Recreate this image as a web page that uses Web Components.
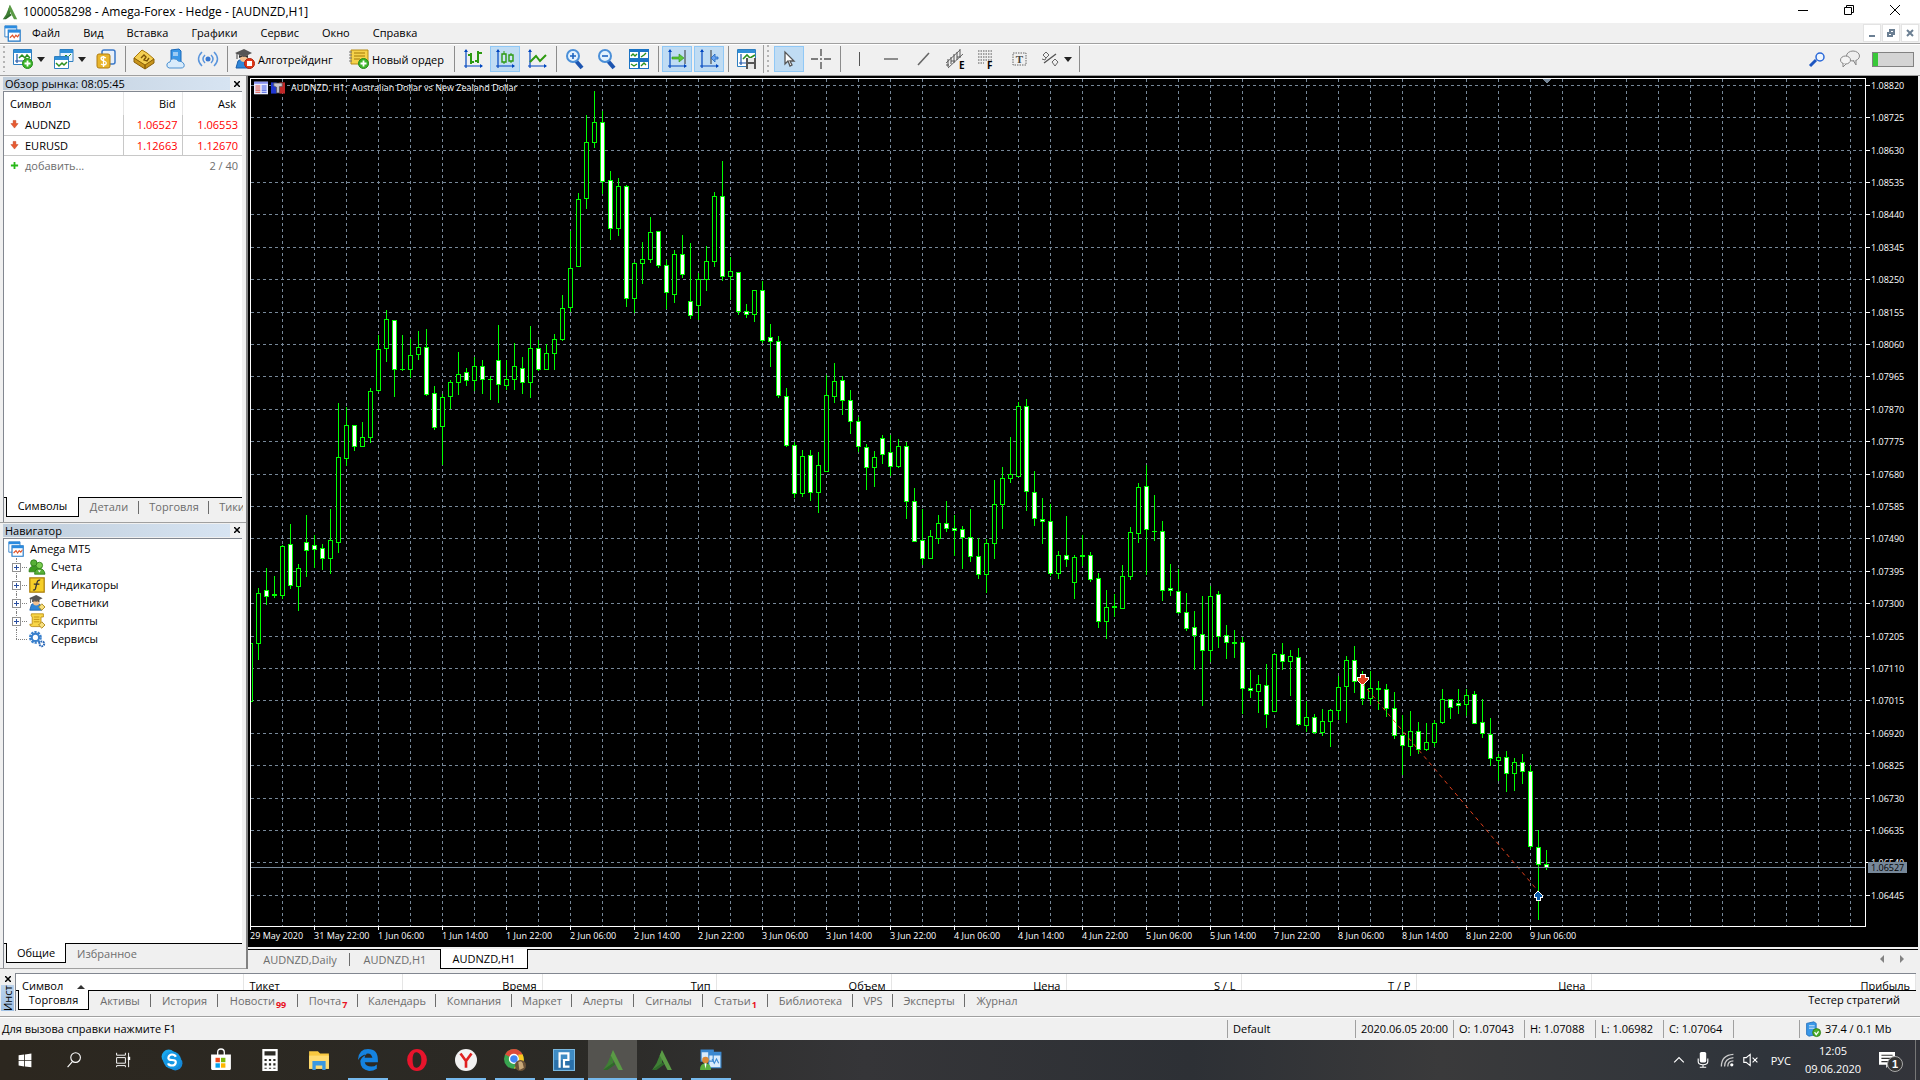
<!DOCTYPE html>
<html lang="ru">
<head>
<meta charset="utf-8">
<title>1000058298 - Amega-Forex - Hedge - [AUDNZD,H1]</title>
<style>
  html, body {
    height: 100%;
    margin: 0;
  }

  body {
    font-family: "Open Sans", "Noto Sans", sans-serif;
    font-size: 11px;
    color: #000;
    background: #f0f0f0;
    overflow: hidden;
  }
</style>
</head>
<body>
<terminal-app></terminal-app>

<script>
// icon drawings, all on a 20x20 grid
const AMEGA = '<path d="M10 1 5 13l-4 6 9-5z" fill="#3f7f35"/><path d="M10 1l9 18h-4L8 6z" fill="#5a9a45"/><path d="M1 19l10-7 1 2-7 5z" fill="#2f6a2a"/>';
const WINDOWS = '<path d="M1 1h14v13H1z" fill="#fff" stroke="#1b74c5"/><path d="M1 1h14v3H1z" fill="#2a8be0"/><path d="M5 6h14v13H5z" fill="#fff" stroke="#1b74c5" stroke-width="1.4"/><path d="M5 6h14v3H5z" fill="#2a8be0"/><path d="M7 15l3-3 2 3 2-3 2 2 2-3" fill="none" stroke="#e0542a" stroke-width="1.4"/>';
const AXES = '<path d="M3 1v18M1 17h18" stroke="#0046c0" stroke-width="1.2" fill="none"/><path d="M1 3l2-3 2 3zM17 15l3 2-3 2z" fill="#0046c0"/>';
const PLUS = '<circle cx="14.500" cy="14.500" r="5" fill="#3cb52a" stroke="#248a18"/><path d="M14.500 11.500v6M11.500 14.500h6" stroke="#fff" stroke-width="1.800"/>';
const HATMAN = '<path d="M3 12q5-4 11 0l2 7H1z" fill="#2f86d8" stroke="#1b5da8"/><circle cx="9" cy="9" r="4" fill="#f0c090"/><path d="M0 4l9-4 8 4-8 4z" fill="#555"/><path d="M4 6v3q5-3 9 0V6l-4 2z" fill="#333"/><path d="M2 4v6" stroke="#444"/>';
const SCROLL = '<path d="M3 1h15v4h-3v12H4q-3 0-3-3h3V5q-2-1-1-4z" fill="#f8d648" stroke="#b8860b"/><path d="M6 5h7M6 8h7M6 11h7" stroke="#b8860b"/>';

const ICONS = {
  amega: AMEGA,
  windows: WINDOWS,
  newChart: '<path d="M.5.500h18v15H.500z" fill="#fff" stroke="#2f7fc0"/><path d="M1 1h17v3H1z" fill="#2f8fd8"/><path d="M4 5v9M2 12h14" stroke="#1d55a8" stroke-width="1.200"/><path d="M6 9l3-3 3 3 2-3 3 3" fill="none" stroke="#2c9020" stroke-width="1.500"/>' + PLUS,
  profiles: '<path d="M6 .500h13v12H6z" fill="#e8f3fd" stroke="#2f7fc0"/><path d="M6 1h13v3H6z" fill="#2f8fd8"/><path d="M9 9l3-3 2 2 3-3" fill="none" stroke="#2c9020"/><path d="M.500 7.500h14v12H.500z" fill="#fff" stroke="#2f7fc0"/><path d="M1 8h13v3H1z" fill="#2f8fd8"/><path d="M2 14l3 3 3-3 2 2 3-3" fill="none" stroke="#2c9020" stroke-width="1.500"/>',
  dollar: '<rect x="6" y="1" width="13" height="14" rx="2" fill="#e8f0fa" stroke="#3a78c8" stroke-width="1.500"/><rect x="1" y="5" width="13" height="14" rx="2" fill="#e9b52b" stroke="#b07d10"/><path d="M10 9q-4-2-5 0 0 2 3 3t2 3q-2 2-5 0M7.500 7v11" fill="none" stroke="#fff" stroke-width="1.300"/>',
  book: '<path d="M0 9l8-8 5 3 7 6-9 7z" fill="#f4cf52" stroke="#a8780c"/><path d="M0 9v4l11 7v-4zM11 16l9-6v4l-9 6z" fill="#c8941c" stroke="#8a6008"/><path d="M7 9l3-3 2 2-2 3 3 1 2-3" stroke="#7a5206" stroke-width="1.400" fill="none"/>',
  cloud: '<path d="M5 1l8-1 2 2v12H5z" fill="#3a98e8" stroke="#1b68b8"/><path d="M7 4h5M7 6h5" stroke="#fff"/><path d="M3 19q-3-1-2-4 1-2 3-2 1-4 5-3 2 0 3 2 5 0 6 3 1 4-3 4z" fill="#d8ebfb" stroke="#4a8fd0"/>',
  signal: '<circle cx="10" cy="10" r="2.500" fill="#3a78d0"/><path d="M7 6q-4 4 0 8M13 6q4 4 0 8M4 3q-7 7 0 14M16 3q7 7 0 14" fill="none" stroke="#5a95dc" stroke-width="1.500"/>',
  algo: HATMAN + '<circle cx="14.500" cy="14.500" r="5" fill="#e03818" stroke="#b02008"/><path d="M12 12h5v5h-5z" fill="#fff"/>',
  order: '<path d="M2 1h17v14H2z" fill="#f6d24a" stroke="#b58a14"/><path d="M0 3h3M0 6h3M0 9h3M0 12h3" stroke="#777"/><path d="M5 4h11M5 7h11M5 10h6" stroke="#a07808"/>' + PLUS,
  bars: AXES + '<path d="M8 4v11M5 6h3M8 13h3M15 2v12M12 12h3M15 4h4" stroke="#2c9a10" stroke-width="2" fill="none"/>',
  candles: AXES + '<path d="M9 2v13M16 4v10" stroke="#2c9a10"/><path d="M7 5h4v8H7zM14 6h4v6h-4z" fill="#cfe5f8" stroke="#2c9a10" stroke-width="1.400"/>',
  line: AXES + '<path d="M3 13l6-6 4 5 6-6" stroke="#2c9a10" stroke-width="2" fill="none"/>',
  zoomIn: '<path d="M11 12l6 7" stroke="#1d55b0" stroke-width="4"/><circle cx="8" cy="7" r="6" fill="#e4f2fd" stroke="#4a8fd8" stroke-width="2"/><path d="M8 4v6M5 7h6" stroke="#1d64c0" stroke-width="1.600"/>',
  zoomOut: '<path d="M11 12l6 7" stroke="#1d55b0" stroke-width="4"/><circle cx="8" cy="7" r="6" fill="#e4f2fd" stroke="#4a8fd8" stroke-width="2"/><path d="M5 7h6" stroke="#1d64c0" stroke-width="1.600"/>',
  tile: '<path d="M0 0h20v20H0z" fill="#1b74c5"/><path d="M1 3h8v6H1zM11 3h8v6h-8zM1 13h8v6H1zM11 13h8v6h-8z" fill="#fff"/><path d="M2 7l2-2 2 2 2-2M12 8l3-2 2-2M2 15l3 2 3-2M12 17l3-3 2 2" stroke="#2c9020" stroke-width="1.400" fill="none"/>',
  shift: AXES + '<path d="M18 1v14" stroke="#333"/><path d="M5 8h7V5l5 4-5 4v-3H5z" fill="#5cc83a" stroke="#2c9010" stroke-width=".600"/>',
  autoscroll: AXES + '<path d="M12 1v14" stroke="#333"/><path d="M19 8h-3V5l-4 4 4 4v-3h3z" fill="#6aa4f0" stroke="#1d64c0" stroke-width=".800"/>',
  saveChart: '<path d="M.500.500h18v17H.500z" fill="#fff" stroke="#2f7fc0"/><path d="M1 1h17v3H1z" fill="#2f8fd8"/><path d="M4 5v11M2 14h8" stroke="#1d55a8" stroke-width="1.200"/><path d="M6 10l4-4 3 3 5-3" fill="none" stroke="#2c9020" stroke-width="1.600"/><path d="M9 9h10v11H9z" fill="#555"/><path d="M11 9h6v4h-6zM11 15h6v5h-6z" fill="#e8e8e8"/>',
  cursor: '<path d="M6 3v12l3-3 2 5 2-1-2-4h4z" fill="#fff" stroke="#555" stroke-width="1.300"/>',
  cross: '<path d="M10 0v7M10 13v7M0 10h7M13 10h7M10 9v2" stroke="#555" stroke-width="1.400"/>',
  vline: '<path d="M10.500 3v14" stroke="#555"/>',
  hline: '<path d="M3 10h14" stroke="#555" stroke-width="1.300"/>',
  trend: '<path d="M5 16L16 4" stroke="#666" stroke-width="1.600"/>',
  channel: '<path d="M1 14L15 1M3 19L18 5" stroke="#666"/><path d="M3 10v8M6 8v7M9 5v9M12 3v8M15 0v8M1 16h3M6 12h4M12 8h4" stroke="#555" fill="none"/><text x="14" y="20" font-size="10" font-weight="700">E</text>',
  fibo: '<path d="M1 2h14M1 5h14M1 8h14M1 11h14M1 14h6" stroke="#555" stroke-dasharray="1.500 1"/><text x="10" y="20" font-size="10" font-weight="700">F</text>',
  textTool: '<path d="M4 4h13v12H4z" fill="none" stroke="#666" stroke-dasharray="1.500 1"/><text x="10.500" y="14" font-size="11" font-weight="700" text-anchor="middle" font-family="Liberation Serif" fill="#444">T</text>',
  arrows: '<path d="M4 14L16 5" stroke="#555" stroke-width="1.300"/><path d="M3 6l3-3 3 3-3 3zM2 10l3 1 1-2M12 13l3-3 3 3-3 4z" fill="none" stroke="#666"/>',
  search: '<path d="M8 11l-6 6" stroke="#1d55c0" stroke-width="3"/><circle cx="12" cy="8" r="4" fill="#eef6ff" stroke="#2a68d8" stroke-width="1.500"/>',
  chat: '<ellipse cx="13" cy="7" rx="6.500" ry="5" fill="#eee" stroke="#888"/><path d="M13 11l3 5v-5" fill="#ddd" stroke="#888"/><ellipse cx="5.500" cy="11" rx="5" ry="4" fill="#f4f4f4" stroke="#888"/><path d="M3 14v4l3-3" fill="#eee" stroke="#888"/>',
  users: '<circle cx="6" cy="5" r="4" fill="#58b038" stroke="#267810"/><path d="M0 16q0-7 6-7t6 7z" fill="#3c9a20" stroke="#267810"/><circle cx="13" cy="8" r="4" fill="#7acc50" stroke="#267810"/><path d="M7 19q0-7 6-7t7 7z" fill="#58b038" stroke="#267810"/><path d="M11 14l2 3 2-3z" fill="#fff"/>',
  indicator: '<path d="M1 1h18v18H1z" fill="#f6cf28" stroke="#a87c08" stroke-width="1.500"/><path d="M14 4q-3-1-4 3L8 15q-1 2-3 1M6 9h7" fill="none" stroke="#333" stroke-width="1.600"/>',
  advisor: HATMAN + '<path d="M12 15l4-4 4 4-4 4z" fill="#f8e080" stroke="#a07808"/>',
  script: SCROLL + '<path d="M12 15l4-4 4 4-4 4z" fill="#f8e080" stroke="#a07808"/>',
  service: '<circle cx="8" cy="8" r="6" fill="none" stroke="#3a80cc" stroke-width="4" stroke-dasharray="2.600 1.170"/><circle cx="8" cy="8" r="4.500" fill="#fff" stroke="#3a80cc" stroke-width="2.500"/><circle cx="16" cy="16" r="3" fill="#fff" stroke="#2a68b8" stroke-width="2.500" stroke-dasharray="2 .800"/>',
  down: '<path d="M7 1h6v7h5l-8 10L2 8h5z" fill="#e85a30" stroke="#b83a18"/>',
  add: '<path d="M10 2v16M2 10h16" stroke="#28b818" stroke-width="4"/>',
  server: '<path d="M2 3l9-2 3 2v14l-9 2-3-2z" fill="#3a98e8" stroke="#1b68b8"/><path d="M5 6h7M5 9h7" stroke="#fff"/><circle cx="14.500" cy="14.500" r="5" fill="#4caf2a" stroke="#2a7a10"/><path d="M12 14l2 3 3-4" fill="none" stroke="#fff" stroke-width="1.600"/>',
  start: '<path d="M2 4l7-1v7H2zM10 3l8-1v8h-8zM2 11h7v7l-7-1zM10 11h8v8l-8-1z" fill="#fff"/>',
  find: '<circle cx="12" cy="7" r="6" fill="none" stroke="#fff" stroke-width="1.400"/><path d="M8 12l-6 7" stroke="#fff" stroke-width="1.400"/>',
  taskview: '<path d="M2 1v3h11V1M2 7h11v7H2zM2 19v-2h11v2M17 1v18" fill="none" stroke="#fff" stroke-width="1.200"/><path d="M16 6h3v4h-3z" fill="#fff"/>',
  skype: '<circle cx="7" cy="7" r="6.500" fill="#1aa8ee"/><circle cx="13" cy="13" r="6.500" fill="#1588d8"/><circle cx="10" cy="10" r="8" fill="#1598e4"/><path d="M13.500 7q-1-2-3.500-2T6.800 7.500 10 10t3.400 2.500T10 15t-3.600-2" fill="none" stroke="#fff" stroke-width="2"/>',
  store: '<path d="M7 6V3q0-3 3-3t3 3v3" fill="none" stroke="#fff" stroke-width="1.200"/><path d="M1 5h18v13q0 1-1 1H2q-1 0-1-1z" fill="#fff"/><path d="M5 8h4v4H5z" fill="#f04a1c"/><path d="M10 8h4v4h-4z" fill="#7cb90a"/><path d="M5 13h4v4H5z" fill="#02a2ec"/><path d="M10 13h4v4h-4z" fill="#fdb700"/>',
  calc: '<path d="M3 0h14v20H3z" fill="#fff"/><path d="M5 2h10v4H5zM5 9h2v2H5zM9 9h2v2H9zM13 9h2v2h-2zM5 13h2v2H5zM9 13h2v2H9zM13 13h2v2h-2zM5 17h2v1H5zM9 17h2v1H9zM13 17h2v1h-2z" fill="#2d2b26"/>',
  folder: '<path d="M1 2h8l2 2h8v14H1z" fill="#f8c840"/><path d="M1 6h18v12H1z" fill="#ffdc72"/><path d="M4 11h12v8h-3v-4H7v4H4z" fill="#3a98e0"/>',
  edge: '<path d="M1 9Q2 0 10 0q9 0 9 10v2H7q1 4 6 4 3 0 5-2v4q-3 2-7 2-8-1-8-9 1-4 6-6-5 0-8 5zM7 8h7q-1-4-4-4T7 8z" fill="#1583e0"/>',
  opera: '<path fill-rule="evenodd" d="M10 0a9 10 0 1 0 0 20 9 10 0 1 0 0-20zm0 3q4 1 4 7t-4 7-4-7 4-7z" fill="#e8142c"/>',
  yandex: '<circle cx="10" cy="10" r="10" fill="#f2f2f2"/><path d="M5 4l5 7v6M15 4l-5 7" fill="none" stroke="#e02020" stroke-width="2.400"/>',
  chrome: '<circle cx="9" cy="9" r="9" fill="#38a550"/><path d="M9 9L1 5q3-5 8-5t8 5z" fill="#dd4b3a"/><path d="M9 18l4-8V5h4q4 10-8 13z" fill="#fbc820"/><circle cx="9" cy="9" r="4" fill="#4285f4" stroke="#fff" stroke-width="1.200"/><circle cx="15" cy="15" r="5" fill="#6a5238"/><path d="M13 12q3-2 4 1l1 4-4 2z" fill="#c8a878"/>',
  pivot: '<path d="M0 0h20v20H0z" fill="#7ab8e0"/><path d="M1 1h18v18H1z" fill="#2a70aa"/><path d="M1 1h18v9H1z" fill="#3f8cc4"/><path d="M6 17V4h8v6H10v6h5" fill="none" stroke="#fff" stroke-width="2"/>',
  meta: '<path d="M1 1h11v10H1zM8 3h11v14H8z" fill="#d8ebfb" stroke="#3a88d0"/><path d="M8 3h11v3H8zM1 1h11v2H1z" fill="#3a88d0"/><path d="M11 9l2 4 2-4 2 4" fill="none" stroke="#3a88d0"/><circle cx="5" cy="10" r="3" fill="#d88838"/><path d="M0 19q0-6 5-6t5 6z" fill="#5cb040"/><path d="M4 13h2l-1 5z" fill="#fff"/>',
  up: '<path d="M4 13l6-6 6 6" fill="none" stroke="#fff" stroke-width="1.500"/>',
  mic: '<rect x="6" y="0" width="8" height="13" rx="2" fill="#fff"/><path d="M4 8v4q0 4 6 4t6-4V8M10 16v3M6 19h8" fill="none" stroke="#fff" stroke-width="1.400"/>',
  wifi: '<path d="M3 18Q3 4 18 3M7 18Q7 8 18 7M11 18q0-7 7-7" fill="none" stroke="#ccc" stroke-width="1.600"/><circle cx="16" cy="16" r="2" fill="#fff"/>',
  mute: '<path d="M1 7h3l5-4v14l-5-4H1zM12 7l6 6M18 7l-6 6" fill="none" stroke="#fff" stroke-width="1.400"/>',
  notify: '<path d="M0 0h20v16h-7l-4 4v-4H0z" fill="#fff"/><path d="M3 4h14M3 8h14M3 12h10" stroke="#333" stroke-width="1.400"/>',
  list: '<path d="M0 1h20v18H0z" fill="#e8ecff"/><path d="M0 1h20v3H0z" fill="#8a94f0"/><path d="M2 7h7M2 10h7M2 13h7M2 16h7" stroke="#e05040" stroke-width="1.500"/><path d="M11 7h7M11 10h7M11 13h7M11 16h7" stroke="#4058e0" stroke-width="1.500"/>',
  trade: '<path d="M0 2h8v16H0z" fill="#2038d0"/><path d="M12 2h8v16h-8z" fill="#c02828"/><path d="M4 3h12v5h-4v9H8V9L4 7z" fill="#c8c8d0" stroke="#555"/>'
};

function define(name, html, setup) {
  const template = document.createElement('template');
  template.innerHTML = html;

  customElements.define(name, class extends HTMLElement {
    constructor() {
      super();
      this.attachShadow({ mode: 'open' });
      this.shadowRoot.appendChild(template.content.cloneNode(true));
    }

    connectedCallback() {
      if (setup && !this.ready) setup(this, this.shadowRoot);
      this.ready = true;
    }
  });
}

// ---------- small parts ----------

define('mt-icon', `
  <style>
    :host { display: block; flex: none; width: var(--size, 20px); height: var(--size, 20px); }
    svg { display: block; width: 100%; height: 100%; overflow: visible; }
  </style>
  <svg viewBox="0 0 20 20" aria-hidden="true"></svg>
`, (el, root) => {
  root.querySelector('svg').innerHTML = ICONS[el.getAttribute('name')];
});

define('tool-button', `
  <style>
    :host { display: block; flex: none; padding: 0 1px; }
    button {
      display: flex; align-items: center; justify-content: center; gap: 4px;
      box-sizing: border-box; width: 30px; height: 26px; padding: 0;
      font: inherit; color: inherit; white-space: nowrap;
      background: none; border: 1px solid transparent;
    }
    :host([pressed]) button { background: #c0dcf3; border-color: #90c8f6; }
    :host([wide]) button { width: var(--w); padding: 0 3px; gap: 3px; justify-content: flex-start; }
    :host([menu]) { padding: 0; }
    :host([menu]) button { width: 41px; }
    i { display: none; border: 4px solid transparent; border-top: 5px solid #222; border-bottom: 0; }
    :host([menu]) i { display: block; }
  </style>
  <button type="button"><mt-icon></mt-icon><slot></slot><i></i></button>
`, (el, root) => {
  const icon = document.createElement('mt-icon');
  icon.setAttribute('name', el.getAttribute('icon'));
  root.querySelector('mt-icon').replaceWith(icon);
  if (el.hasAttribute('label')) {
    root.querySelector('button').setAttribute('aria-label', el.getAttribute('label'));
  }
});

define('tool-sep', `
  <style>
    :host { display: block; flex: none; width: 6px; height: 26px; }
    :host::before { content: ""; display: block; width: 1px; height: 100%; margin-left: 3px; background: #8c8c8c; }
  </style>
`);

define('tool-grip', `
  <style>
    :host { display: block; flex: none; width: 8px; height: 26px; }
    :host::before {
      content: ""; display: block; width: 2px; height: 100%; margin-left: 3px;
      background: repeating-linear-gradient(#b4b4b4 0 2px, transparent 2px 5px);
    }
    :host([edge]) { width: 10px; height: 28px; box-sizing: border-box; border-left: 1px solid #a0a0a0; }
  </style>
`);

define('mt-tab', `
  <style>
    :host { display: block; flex: none; width: var(--w, auto); }
    button {
      display: flex; align-items: center; justify-content: center;
      box-sizing: border-box; width: 100%; height: 19px; padding: 0; position: relative;
      font: inherit; line-height: 14px; color: #6d6d6d; white-space: nowrap;
      background: none; border: 0;
    }
    button::after {
      content: ""; position: absolute; right: 0; top: 3px; width: 1px; height: 13px; background: #6d6d6d;
    }
    :host([active]) { margin-top: -1px; }
    :host([active]) button { height: 20px; color: #000; background: #fff; border: 1px solid #000; border-top: 0; }
    :host([active]) button::after, :host([last]) button::after { display: none; }
    sub { align-self: flex-end; margin-left: 1px; font-size: 9px; line-height: 10px; font-weight: 700; color: #e81123; }
  </style>
  <button type="button"><slot></slot></button>
`, (el, root) => {
  if (!el.hasAttribute('badge')) return;
  const sub = document.createElement('sub');
  sub.textContent = el.getAttribute('badge');
  root.querySelector('button').appendChild(sub);
});

define('tab-strip', `
  <style>
    :host {
      display: flex; flex: none; align-items: flex-start; height: 19px; padding: 0 2px;
      border-top: 1px solid #000; background: #f0f0f0; overflow: hidden; overflow: clip;
      overflow-clip-margin: 1px;
    }
  </style>
  <slot></slot>
`);

define('dock-panel', `
  <style>
    :host { display: flex; flex-direction: column; min-height: 0; padding: 0 4px 0 3px; border-bottom: 1px solid #a0a0a0; }
    header { display: flex; flex: none; align-items: center; height: 15px; margin-right: -2px; }
    h2 {
      flex: 1; margin: 0; padding-left: 2px; font-size: 11px; line-height: 13px; font-weight: 400;
      background: linear-gradient(90deg, #bfcddb, #d7e4f2);
    }
    button { width: 14px; height: 14px; padding: 0; border: 0; background: none; }
    svg { display: block; margin: auto; }
    .body {
      flex: 1; min-height: 0; display: flex; flex-direction: column; background: #fff;
      border-top: 1px solid #828790; border-left: 1px solid #828790; overflow: hidden;
    }
    slot[name=tabs] { display: block; flex: none; padding-bottom: 5px; border-left: 1px solid #828790; }
  </style>
  <header>
    <h2></h2>
    <button type="button" aria-label="Закрыть"><svg width="6" height="6" viewBox="0 0 6 6"><path d="M0 0l6 6M6 0L0 6" stroke="#000" stroke-width="1.500"/></svg></button>
  </header>
  <div class="body"><slot></slot></div>
  <slot name="tabs"></slot>
`, (el, root) => {
  root.querySelector('h2').textContent = el.getAttribute('heading');
});

// ---------- window chrome ----------

define('title-bar', `
  <style>
    :host { display: flex; flex: none; align-items: center; height: 23px; padding: 0 2px; background: #fff; }
    mt-icon { --size: 16px; }
    h1 { flex: 1; margin: 0 0 0 5px; font-size: 12px; line-height: 16px; font-weight: 400; }
    button { align-self: flex-start; width: 46px; height: 20px; padding: 0; border: 0; background: none; }
    svg { display: block; margin: auto; }
    path { fill: none; stroke: #000; }
  </style>
  <mt-icon name="amega"></mt-icon>
  <h1>1000058298 - Amega-Forex - Hedge - [AUDNZD,H1]</h1>
  <button type="button" aria-label="Свернуть"><svg width="10" height="10"><path d="M0 5.500h10"/></svg></button>
  <button type="button" aria-label="Развернуть"><svg width="10" height="10"><path d="M.500 2.500h7v7h-7zM2.500 2.500v-2h7v7h-2"/></svg></button>
  <button type="button" aria-label="Закрыть"><svg width="10" height="10"><path d="M0 0l10 10M10 0L0 10"/></svg></button>
`);

define('menu-bar', `
  <style>
    :host { display: flex; flex: none; align-items: center; height: 20px; padding: 0 1px 0 4px; border-bottom: 1px solid #a0a0a0; background: #f0f0f0; }
    mt-icon { --size: 17px; }
    nav { display: flex; flex: 1; }
    nav button { padding: 0 12px 0 11px; font: inherit; line-height: 16px; border: 0; background: none; }
    .mdi { display: flex; gap: 1px; }
    .mdi button { width: 18px; height: 18px; padding: 0; border: 1px solid #e3e3e3; background: #fff; }
    svg { display: block; margin: auto; }
    path { fill: none; stroke: #6b7f93; stroke-width: 2; }
  </style>
  <mt-icon name="windows"></mt-icon>
  <nav>
    <button>Файл</button><button>Вид</button><button>Вставка</button><button>Графики</button>
    <button>Сервис</button><button>Окно</button><button>Справка</button>
  </nav>
  <div class="mdi">
    <button aria-label="Свернуть окно"><svg width="8" height="8"><path d="M1 7h6"/></svg></button>
    <button aria-label="Восстановить окно"><svg width="8" height="8"><path d="M1 4h4v3H1zM3 3V1h4v4H6" stroke-width="1"/></svg></button>
    <button aria-label="Закрыть окно"><svg width="8" height="8"><path d="M1 1l6 6M7 1L1 7"/></svg></button>
  </div>
`);

define('tool-bar', `
  <style>
    :host { display: flex; flex: none; align-items: center; height: 28px; padding-bottom: 2px; border-top: 1px solid #fff; border-bottom: 1px solid #a0a0a0; background: #f0f0f0; }
    .fill { flex: 1; }
    .ping { width: 40px; height: 13px; margin: 0 6px; background: #d4d4d4; border: 1px solid #828282; }
    .ping::before { content: ""; display: block; width: 5px; height: 100%; background: #38c838; }
  </style>
  <tool-grip></tool-grip>
  <tool-button icon="newChart" menu label="Новый график"></tool-button>
  <tool-button icon="profiles" menu label="Профили"></tool-button>
  <tool-button icon="dollar" label="Символы"></tool-button>
  <tool-sep></tool-sep>
  <tool-button icon="book" label="Обучение"></tool-button>
  <tool-button icon="cloud" label="Хостинг"></tool-button>
  <tool-button icon="signal" label="Сигналы"></tool-button>
  <tool-sep></tool-sep>
  <tool-button icon="algo" wide style="--w: 112px">Алготрейдинг</tool-button>
  <tool-button icon="order" wide style="--w: 105px">Новый ордер</tool-button>
  <tool-sep></tool-sep>
  <tool-button icon="bars" label="Бары"></tool-button>
  <tool-button icon="candles" pressed label="Свечи"></tool-button>
  <tool-button icon="line" label="Линия"></tool-button>
  <tool-sep></tool-sep>
  <tool-button icon="zoomIn" label="Увеличить"></tool-button>
  <tool-button icon="zoomOut" label="Уменьшить"></tool-button>
  <tool-button icon="tile" label="Окна мозаикой"></tool-button>
  <tool-sep></tool-sep>
  <tool-button icon="shift" pressed label="Автопрокрутка"></tool-button>
  <tool-button icon="autoscroll" pressed label="Сдвиг графика"></tool-button>
  <tool-sep></tool-sep>
  <tool-button icon="saveChart" label="Шаблоны"></tool-button>
  <tool-grip edge></tool-grip>
  <tool-button icon="cursor" pressed label="Курсор"></tool-button>
  <tool-button icon="cross" label="Перекрестие"></tool-button>
  <tool-sep></tool-sep>
  <tool-button icon="vline" label="Вертикальная линия"></tool-button>
  <tool-button icon="hline" label="Горизонтальная линия"></tool-button>
  <tool-button icon="trend" label="Трендовая линия"></tool-button>
  <tool-button icon="channel" label="Равноудаленный канал"></tool-button>
  <tool-button icon="fibo" label="Уровни Фибоначчи"></tool-button>
  <tool-button icon="textTool" label="Текст"></tool-button>
  <tool-button icon="arrows" menu label="Стрелки"></tool-button>
  <tool-sep></tool-sep>
  <div class="fill"></div>
  <tool-button icon="search" label="Поиск"></tool-button>
  <tool-button icon="chat" label="Чат"></tool-button>
  <div class="ping"></div>
`);

// ---------- left column ----------

define('market-watch', `
  <style>
    :host { display: block; }
    table { width: 100%; border-collapse: collapse; table-layout: fixed; }
    th, td { box-sizing: border-box; height: 20px; padding: 0 4px; font-weight: 400; font-size: 11px; line-height: 15px; text-align: right; border-bottom: 1px solid #c8c8c8; border-right: 1px solid #c8c8c8; }
    th { height: 23px; padding: 0 6px; border-bottom: 0; border-right-color: #e5e5e5; }
    th:first-child, td:first-child { text-align: left; padding-left: 6px; }
    th:last-child, td:last-child { border-right: 0; }
    td { color: #f00; }
    td span { display: flex; align-items: center; gap: 6px; color: #000; }
    mt-icon { --size: 9px; }
    .add td { border: 0; color: #6d6d6d; }
    .add span { color: #6d6d6d; }
  </style>
  <table>
    <colgroup><col><col width="59"><col width="60"></colgroup>
    <thead><tr><th>Символ</th><th>Bid</th><th>Ask</th></tr></thead>
    <tbody>
      <tr><td><span><mt-icon name="down"></mt-icon>AUDNZD</span></td><td>1.06527</td><td>1.06553</td></tr>
      <tr><td><span><mt-icon name="down"></mt-icon>EURUSD</span></td><td>1.12663</td><td>1.12670</td></tr>
      <tr class="add"><td><span><mt-icon name="add"></mt-icon>добавить...</span></td><td></td><td>2 / 40</td></tr>
    </tbody>
  </table>
`);

define('nav-tree', `
  <style>
    :host { display: block; padding: 1px 4px; }
    .root, li { display: flex; align-items: center; height: 18px; line-height: 15px; }
    .root { gap: 6px; }
    mt-icon { --size: 16px; }
    ul { margin: 0; padding: 0 0 0 8px; list-style: none; }
    li { position: relative; padding-left: 13px; gap: 6px; }
    li::before { content: ""; position: absolute; left: 0; top: 0; width: 1px; height: 18px; border-left: 1px dotted #808080; }
    li:last-child::before { height: 9px; }
    li::after { content: ""; position: absolute; left: 0; top: 9px; width: 11px; border-top: 1px dotted #808080; }
    button { position: absolute; z-index: 1; left: -4px; top: 5px; width: 9px; height: 9px; padding: 0; border: 1px solid #919191; background: linear-gradient(#2a4fa0, #2a4fa0) center / 5px 1px no-repeat, linear-gradient(#2a4fa0, #2a4fa0) center / 1px 5px no-repeat, #fff; }
  </style>
  <div class="root"><mt-icon name="windows"></mt-icon>Amega MT5</div>
  <ul>
    <li><button aria-label="Раскрыть"></button><mt-icon name="users"></mt-icon>Счета</li>
    <li><button aria-label="Раскрыть"></button><mt-icon name="indicator"></mt-icon>Индикаторы</li>
    <li><button aria-label="Раскрыть"></button><mt-icon name="advisor"></mt-icon>Советники</li>
    <li><button aria-label="Раскрыть"></button><mt-icon name="script"></mt-icon>Скрипты</li>
    <li><mt-icon name="service"></mt-icon>Сервисы</li>
  </ul>
`);

// ---------- chart ----------

// one bar per 8px: high, body top, body bottom, low, then 1 = up, 0 = down
const BARS = `643,643,702,702,1 588,593,644,660,1 568,590,597,605,0 576,594,596,598,0 545,546,596,599,1
524,544,586,589,0 564,568,587,611,1 515,542,551,577,0 535,545,550,568,0 544,548,559,570,0 509,540,559,574,1
403,457,543,553,1 407,425,459,466,1 425,425,447,451,0 422,437,447,447,1 388,391,438,443,1 335,349,391,392,1
310,319,349,362,1 320,320,370,397,0 335,369,370,371,0 339,355,370,378,1 331,347,355,360,1 329,347,395,396,0
386,393,428,430,0 394,397,427,465,1 380,382,397,409,1 352,374,383,395,1 368,372,381,386,0 357,366,381,391,1
360,366,380,394,0 376,379,380,400,0 325,360,385,403,0 360,379,386,390,1 343,366,380,390,1 357,368,383,394,0
326,348,383,398,1 340,348,370,371,0 344,353,370,370,1 334,339,354,370,1 295,308,340,341,1 231,268,308,312,1
193,199,267,267,1 115,142,199,209,1 91,122,143,148,1 111,122,182,194,0 171,180,229,240,0 178,186,229,236,1
185,186,299,307,0 262,263,299,313,1 242,259,264,284,1 217,232,260,263,1 231,231,266,268,0 260,265,293,309,0
250,254,295,303,1 235,254,275,278,0 243,301,316,319,0 273,279,306,320,1 246,261,280,291,1 192,196,262,267,1
161,196,277,281,0 257,271,277,300,1 272,272,312,315,0 304,311,315,318,0 290,290,315,322,1 281,290,341,343,0
324,337,342,367,0 336,341,396,398,0 388,396,446,447,0 442,445,494,498,0 450,456,494,497,1 450,455,493,501,0
452,465,493,513,1 375,395,472,472,1 363,381,397,403,1 376,380,401,415,0 390,400,422,434,0 417,421,447,452,0
444,447,468,490,0 451,457,468,487,1 435,438,455,464,0 435,452,467,476,0 439,446,467,468,1 442,446,502,519,0
488,501,542,542,0 509,540,559,565,0 530,536,559,559,1 515,523,539,544,1 501,523,529,532,0 515,528,531,556,0
526,529,538,569,0 509,537,557,562,0 538,556,575,579,0 539,543,575,593,1 480,504,544,559,1 467,478,505,529,1
437,474,479,483,1 402,406,477,477,1 399,406,492,511,0 471,492,519,526,0 498,519,522,544,0 504,521,574,576,0
551,555,574,579,1 516,555,560,567,0 555,557,583,599,1 535,555,557,566,0 552,555,580,582,0 573,578,622,628,0
590,607,622,639,1 594,606,608,617,0 565,576,609,609,1 527,532,577,580,1 483,487,534,543,1 465,486,530,575,0
495,531,532,541,0 521,531,591,601,0 564,588,591,596,0 569,591,613,614,0 593,612,629,631,0 611,627,636,670,0
596,634,651,706,0 586,596,651,662,1 591,594,637,648,0 625,635,643,659,0 630,642,644,658,0 637,642,689,714,0
670,688,691,698,0 675,684,692,713,1 664,685,715,728,0 653,654,712,712,1 643,654,662,670,0 650,656,662,696,1
648,657,725,726,0 701,717,726,732,1 714,717,733,734,0 709,721,733,736,1 709,710,722,747,1 676,687,711,720,1
656,660,687,723,1 646,660,682,693,0 671,678,699,705,0 671,688,699,705,1 681,688,690,710,0 684,689,709,717,0
692,708,736,739,0 715,735,746,775,0 711,731,747,756,1 722,731,750,754,0 723,742,750,751,1 720,723,743,747,1
689,699,723,724,1 699,699,708,719,0 689,703,706,714,0 689,695,705,716,1 691,694,724,724,0 699,722,734,738,0
718,734,759,766,0 754,757,761,781,1 751,757,774,792,0 758,762,774,791,1 754,762,772,784,0 765,771,847,849,0
830,847,865,920,0 850,864,868,870,0`.split(/\s+/).map(bar => bar.split(',').map(Number));

const TIMES = ['29 May 2020', '31 May 22:00', '1 Jun 06:00', '1 Jun 14:00', '1 Jun 22:00', '2 Jun 06:00', '2 Jun 14:00',
  '2 Jun 22:00', '3 Jun 06:00', '3 Jun 14:00', '3 Jun 22:00', '4 Jun 06:00', '4 Jun 14:00', '4 Jun 22:00',
  '5 Jun 06:00', '5 Jun 14:00', '7 Jun 22:00', '8 Jun 06:00', '8 Jun 14:00', '8 Jun 22:00', '9 Jun 06:00'];

const X0 = 2;       // left edge of the plot inside the chart
const Y0 = 76;      // bar levels count from here
const STEP = 8;
const AXIS_W = 53;
const AXIS_H = 21;

define('price-chart', `
  <style>
    :host { display: block; position: relative; flex: 1; min-height: 0; background: #000; overflow: hidden; }
    svg { position: absolute; inset: 0; width: 100%; height: 100%; font-size: 9px; fill: #fff; }
    .caption { position: absolute; left: 6px; top: 5px; display: flex; align-items: center; gap: 3px; font-size: 9px; line-height: 12px; color: #fff; }
    .caption mt-icon { --size: 14px; }
    .caption span { margin-left: 3px; white-space: pre; }
  </style>
  <svg shape-rendering="crispEdges"></svg>
  <div class="caption"><mt-icon name="list"></mt-icon><mt-icon name="trade"></mt-icon><span>AUDNZD, H1:  Australian Dollar vs New Zealand Dollar</span></div>
`, (el, root) => {
  const svg = root.querySelector('svg');

  const rect = (x, y, w, h, fill) => `<rect x="${x}" y="${y}" width="${w}" height="${h}" fill="${fill}"/>`;

  function draw() {
    const right = el.clientWidth - AXIS_W;
    const bottom = el.clientHeight - AXIS_H;
    let out = '';

    // grid and price scale
    for (let x = X0 + 32; x < right; x += 32) {
      out += `<path d="M${x + 0.5} 3V${bottom}" stroke="#778899" stroke-dasharray="3 3"/>`;
    }
    for (let i = 0; i < 26; i++) {
      const y = Math.round(84.8 + 32.4 * i) - Y0;
      out += `<path d="M${X0 + 1} ${y + 0.5}H${right}" stroke="#778899" stroke-dasharray="3 3"/>`;
      out += rect(right, y, 5, 1, '#fff');
      out += `<text x="${right + 6}" y="${y + 4}">${(1.0882 - 0.00095 * i).toFixed(5)}</text>`;
    }

    // bars
    BARS.forEach(([high, top, base, low, up], i) => {
      const x = X0 + i * STEP;
      out += rect(x, high - Y0, 1, low - high, '#0f0');
      out += rect(x - 2, top - Y0, 5, base - top, '#0f0');
      if (base - top > 2) out += rect(x - 1, top - Y0 + 1, 3, base - top - 2, up ? '#000' : '#fff');
    });

    // closed deal
    out += '<path d="M1114 607L1290 815" stroke="#e0401c" stroke-dasharray="4 4" shape-rendering="auto"/>';
    out += '<path d="M1112 598h5v3h3v3l-4 4h-3l-4-4v-3h3z" fill="#e0401c" stroke="#fff"/>';
    out += '<path d="M1290 815l4 4v2h-2v3h-4v-3h-2v-2z" fill="#0a5aa8" stroke="#fff"/>';

    // last price
    const last = 867 - Y0;
    out += rect(X0, last, right - X0, 1, '#778899');
    out += rect(right + 3, last - 5, 39, 11, '#778899');
    out += `<text x="${right + 6}" y="${last + 4}" fill="#000">1.06527</text>`;

    // frame and time scale
    out += rect(0, 0, X0, bottom + 1, '#000');
    out += rect(X0, 2, right - X0, 1, '#fff') + rect(X0, 2, 1, bottom - 2, '#fff');
    out += rect(right, 2, 1, bottom - 1, '#fff') + rect(X0, bottom, right - X0, 1, '#fff');
    out += `<path d="M${X0 + 1292} 3h9l-4 4z" fill="#778899"/>`;
    TIMES.forEach((time, i) => {
      out += rect(X0 + i * 64, bottom, 1, 4, '#fff');
      out += `<text x="${X0 + i * 64}" y="${bottom + 13}">${time}</text>`;
    });

    svg.innerHTML = out;
  }

  new ResizeObserver(draw).observe(el);
  draw();
});

// ---------- bottom ----------

define('trade-toolbox', `
  <style>
    :host { display: flex; flex: none; padding: 4px 4px 5px 0; border-bottom: 1px solid #a0a0a0; }
    .side { display: flex; flex-direction: column; align-items: center; width: 15px; }
    .side button { height: 12px; padding: 0; border: 0; background: none; }
    .side button svg { display: block; }
    .side span { width: 13px; height: 26px; line-height: 13px; font-size: 11px; writing-mode: vertical-rl; transform: rotate(180deg); text-align: center; background: linear-gradient(#9fc0e4, #bcd3ec); overflow: hidden; }
    .main { flex: 1; min-width: 0; display: flex; flex-direction: column; border-top: 1px solid #828790; border-left: 1px solid #828790; }
    .clip { height: 16px; background: #fff; overflow: hidden; }
    table { width: 100%; border-collapse: collapse; table-layout: fixed; }
    th { height: 22px; padding: 0 5px; font-size: 11px; line-height: 15px; font-weight: 400; text-align: right; border-right: 1px solid #e5e5e5; }
    th:nth-child(-n+2) { text-align: left; padding-left: 6px; }
    i { display: inline-block; margin-left: 14px; vertical-align: middle; border: 4px solid transparent; border-bottom: 4px solid #333; border-top: 0; }
    .tester { margin-left: auto; padding: 0 14px; border: 0; background: none; font: inherit; line-height: 18px; }
  </style>
  <div class="side">
    <button type="button" aria-label="Закрыть"><svg width="6" height="6" viewBox="0 0 6 6"><path d="M0 0l6 6M6 0L0 6" stroke="#000" stroke-width="1.500"/></svg></button>
    <span>Инст</span>
  </div>
  <div class="main">
    <div class="clip">
      <table>
        <colgroup><col width="227"><col width="159"><col width="140"><col width="174"><col width="175"><col width="175"><col width="175"><col width="175"><col width="175"><col></colgroup>
        <thead><tr><th>Символ<i></i></th><th>Тикет</th><th>Время</th><th>Тип</th><th>Объем</th><th>Цена</th><th>S / L</th><th>T / P</th><th>Цена</th><th>Прибыль</th></tr></thead>
      </table>
    </div>
    <tab-strip>
      <mt-tab active style="--w: 71px">Торговля</mt-tab>
      <mt-tab style="--w: 62px">Активы</mt-tab>
      <mt-tab style="--w: 67px">История</mt-tab>
      <mt-tab style="--w: 80px" badge="99">Новости</mt-tab>
      <mt-tab style="--w: 60px" badge="7">Почта</mt-tab>
      <mt-tab style="--w: 78px">Календарь</mt-tab>
      <mt-tab style="--w: 76px">Компания</mt-tab>
      <mt-tab style="--w: 60px">Маркет</mt-tab>
      <mt-tab style="--w: 62px">Алерты</mt-tab>
      <mt-tab style="--w: 69px">Сигналы</mt-tab>
      <mt-tab style="--w: 65px" badge="1">Статьи</mt-tab>
      <mt-tab style="--w: 85px">Библиотека</mt-tab>
      <mt-tab style="--w: 40px">VPS</mt-tab>
      <mt-tab style="--w: 72px">Эксперты</mt-tab>
      <mt-tab style="--w: 64px" last>Журнал</mt-tab>
      <button class="tester" type="button">Тестер стратегий</button>
    </tab-strip>
  </div>
`);

define('status-bar', `
  <style>
    :host { display: flex; flex: none; align-items: center; height: 22px; border-top: 1px solid #fff; line-height: 16px; white-space: nowrap; }
    span { box-sizing: border-box; flex: none; width: var(--w); height: 18px; padding-left: 5px; border-left: 1px solid #a0a0a0; line-height: 18px; }
    .help { flex: 1; padding-left: 2px; border: 0; }
    .net { display: flex; align-items: center; gap: 4px; white-space: normal; }
    mt-icon { --size: 16px; }
  </style>
  <span class="help">Для вызова справки нажмите F1</span>
  <span style="--w: 128px">Default</span>
  <span style="--w: 98px">2020.06.05 20:00</span>
  <span style="--w: 71px">O: 1.07043</span>
  <span style="--w: 71px">H: 1.07088</span>
  <span style="--w: 68px">L: 1.06982</span>
  <span style="--w: 70px">C: 1.07064</span>
  <span style="--w: 66px"></span>
  <span class="net" style="--w: 121px"><mt-icon name="server"></mt-icon>37.4 / 0.1 Mb</span>
`);

define('task-button', `
  <style>
    :host { display: block; flex: none; width: 49px; padding: 0; }
    button { display: flex; align-items: center; justify-content: center; width: 100%; height: 40px; padding: 0; border: 0; background: none; }
    mt-icon { --size: 22px; }
    :host([small]) mt-icon { --size: 16px; }
    :host([open]) button { background: linear-gradient(#76b9ed, #76b9ed) bottom / 40px 2px no-repeat; }
    :host([current]) button { background: linear-gradient(#76b9ed, #76b9ed) bottom / 100% 2px no-repeat, #54534f; }
  </style>
  <button type="button"></button>
`, (el, root) => {
  const button = root.querySelector('button');
  button.innerHTML = `<mt-icon name="${el.getAttribute('icon')}"></mt-icon>`;
  button.setAttribute('aria-label', el.getAttribute('icon'));
});

define('task-bar', `
  <style>
    :host { display: flex; flex: none; align-items: center; height: 40px; color: #fff; background: linear-gradient(90deg, #2c271f, #2b2a26 30%, #353538 45%, #2d3035 62%, #3a3a3b 75%, #2f343b 92%, #33343a); }
    .fill { flex: 1; }
    .tray { display: flex; align-items: center; gap: 8px; }
    .tray mt-icon { --size: 16px; }
    .lang { margin: 0 4px; }
    time { display: block; width: 76px; line-height: 18px; text-align: center; }
    .bell { position: relative; display: flex; align-items: center; box-sizing: border-box; padding: 0 0 0 8px; width: 44px; height: 24px; border: 0; background: none; }
    .bell mt-icon { --size: 16px; }
    .bell b { position: absolute; left: 16px; top: 8px; box-sizing: border-box; width: 16px; height: 16px; border: 1px solid #aaa; border-radius: 50%; background: #333; color: #fff; font-size: 11px; line-height: 14px; }
    .edge { width: 4px; height: 40px; border-left: 1px solid #777; }
  </style>
  <task-button icon="start" small></task-button>
  <task-button icon="find" small></task-button>
  <task-button icon="taskview" small></task-button>
  <task-button icon="skype"></task-button>
  <task-button icon="store"></task-button>
  <task-button icon="calc"></task-button>
  <task-button icon="folder"></task-button>
  <task-button icon="edge" open></task-button>
  <task-button icon="opera"></task-button>
  <task-button icon="yandex" open></task-button>
  <task-button icon="chrome" open></task-button>
  <task-button icon="pivot" open></task-button>
  <task-button icon="amega" current></task-button>
  <task-button icon="amega" open></task-button>
  <task-button icon="meta" open></task-button>
  <div class="fill"></div>
  <div class="tray">
    <mt-icon name="up"></mt-icon><mt-icon name="mic"></mt-icon><mt-icon name="wifi"></mt-icon><mt-icon name="mute"></mt-icon>
    <span class="lang">РУС</span>
  </div>
  <time datetime="2020-06-09T12:05">12:05<br>09.06.2020</time>
  <button class="bell" type="button" aria-label="Уведомления"><mt-icon name="notify"></mt-icon><b>1</b></button>
  <div class="edge"></div>
`);

define('terminal-app', `
  <style>
    :host { display: flex; flex-direction: column; height: 100vh; background: #f0f0f0; }
    main { flex: 1; min-height: 0; display: flex; }
    .left { flex: none; width: 246px; display: flex; flex-direction: column; }
    .left dock-panel { flex: 1; }
    .right { flex: 1; min-width: 0; display: flex; flex-direction: column; padding-right: 2px; border-left: 2px solid #828282; }
    .right tab-strip { margin-top: 2px; }
    .arrows { display: flex; gap: 12px; margin: 4px 10px 0 auto; }
    .arrows button { width: 8px; height: 10px; padding: 0; border: 0; background: none; }
    .arrows svg { display: block; }
  </style>
  <title-bar></title-bar>
  <menu-bar></menu-bar>
  <tool-bar></tool-bar>
  <main>
    <div class="left">
      <dock-panel heading="Обзор рынка: 08:05:45">
        <market-watch></market-watch>
        <tab-strip slot="tabs">
          <mt-tab active style="--w: 73px">Символы</mt-tab>
          <mt-tab style="--w: 60px">Детали</mt-tab>
          <mt-tab style="--w: 70px">Торговля</mt-tab>
          <mt-tab style="--w: 46px" last>Тики</mt-tab>
        </tab-strip>
      </dock-panel>
      <dock-panel heading="Навигатор">
        <nav-tree></nav-tree>
        <tab-strip slot="tabs">
          <mt-tab active style="--w: 60px">Общие</mt-tab>
          <mt-tab style="--w: 82px" last>Избранное</mt-tab>
        </tab-strip>
      </dock-panel>
    </div>
    <div class="right">
      <price-chart></price-chart>
      <tab-strip>
        <mt-tab style="--w: 100px">AUDNZD,Daily</mt-tab>
        <mt-tab style="--w: 90px" last>AUDNZD,H1</mt-tab>
        <mt-tab active style="--w: 88px">AUDNZD,H1</mt-tab>
        <div class="arrows">
          <button type="button" aria-label="Назад"><svg width="8" height="10"><path d="M6 1v8L2 5z" fill="#828282"/></svg></button>
          <button type="button" aria-label="Вперед"><svg width="8" height="10"><path d="M2 1v8l4-4z" fill="#828282"/></svg></button>
        </div>
      </tab-strip>
    </div>
  </main>
  <trade-toolbox></trade-toolbox>
  <status-bar></status-bar>
  <task-bar></task-bar>
`);
</script>
</body>
</html>
